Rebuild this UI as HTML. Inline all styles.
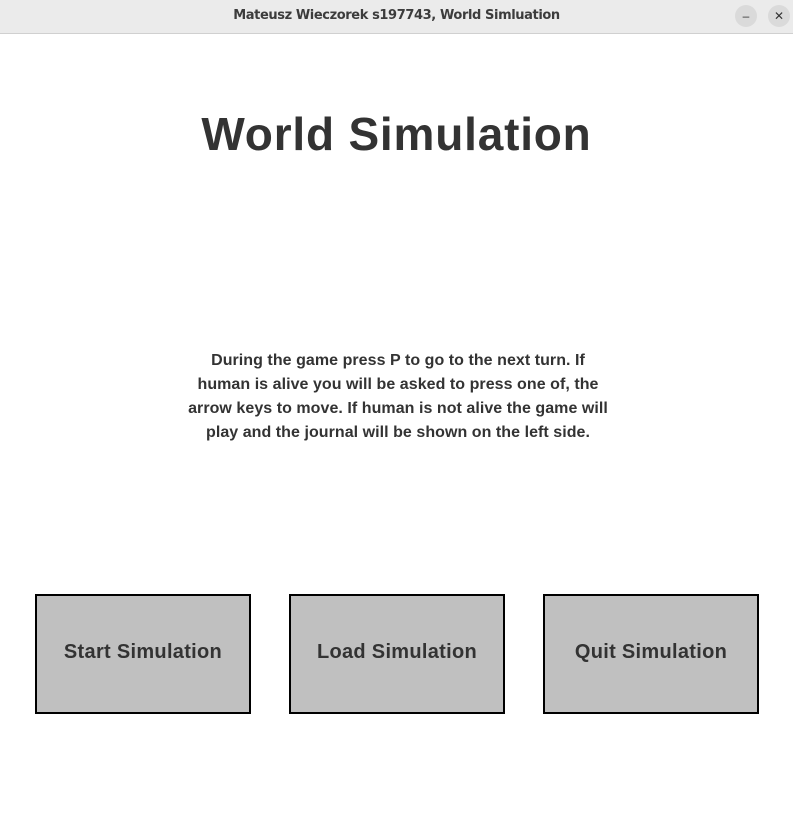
<!DOCTYPE html>
<html><head><style>
body{margin:0;width:793px;height:831px;background:#fff;font-family:"Liberation Sans",sans-serif;position:relative;overflow:hidden;color:#333}
.tb{position:absolute;left:0;top:0;width:793px;height:33px;background:#ebebeb;border-bottom:1px solid #d0d0d0}
.tb .t{position:absolute;left:0;width:793px;text-align:center;top:8px;font-family:"DejaVu Sans",sans-serif;font-weight:bold;font-size:13px;color:#3c3c3c;letter-spacing:-0.4px}
.c{position:absolute;top:5px;width:22px;height:22px;border-radius:11px;background:#dadada;font-size:12px;text-align:center;line-height:22px;color:#333}
h1{position:absolute;left:0;width:793px;text-align:center;top:107px;margin:0;font-size:46px;font-weight:bold;color:#333;letter-spacing:0.8px}
.p{position:absolute;left:100px;width:596px;top:349px;text-align:center;font-weight:bold;font-size:16px;line-height:24px;color:#333;letter-spacing:0.05px}
.b{position:absolute;top:594px;width:212px;height:116px;border:2px solid #000;background:#c0c0c0;text-align:center;line-height:112px;font-weight:bold;font-size:20px;color:#333;letter-spacing:0.3px}
</style></head><body>
<div class="tb"><div class="t">Mateusz Wieczorek s197743, World Simluation</div>
<div class="c" style="left:735px">–</div><div class="c" style="left:768px">✕</div></div>
<h1>World Simulation</h1>
<div class="p">During the game press P to go to the next turn. If<br>human is alive you will be asked to press one of, the<br>arrow keys to move. If human is not alive the game will<br>play and the journal will be shown on the left side.</div>
<div class="b" style="left:35px">Start Simulation</div>
<div class="b" style="left:289px">Load Simulation</div>
<div class="b" style="left:543px">Quit Simulation</div>
</body></html>
